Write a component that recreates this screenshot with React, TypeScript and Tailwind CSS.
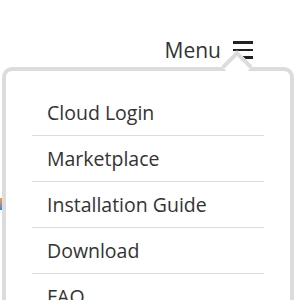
import React from "react";

const items = ["Cloud Login", "Marketplace", "Installation Guide", "Download", "FAQ"];

export default function App() {
  return (
    <div
      className="relative w-[300px] h-[300px] overflow-hidden bg-white text-[#333]"
      style={{ fontFamily: '"Open Sans", "Noto Sans", sans-serif' }}
    >
      <div className="flex justify-end items-center pt-[36px] pr-[47px] gap-[12px]">
        <span className="text-[21px] leading-[28px] text-[#333]">Menu</span>
        <span className="flex flex-col gap-[5px] w-[20px]">
          <span className="block h-[2.5px] bg-[#222]" />
          <span className="block h-[2.5px] bg-[#222]" />
          <span className="block h-[2.5px] bg-[#222]" />
        </span>
      </div>
      <div className="absolute left-[2px] top-[67px] w-[292px] h-[260px] border-4 border-[#dcdcdc] rounded-[10px] bg-white">
        <div className="absolute left-[220px] top-[-16px] w-[22px] h-[22px] rotate-45 bg-white border-t-4 border-l-4 border-[#dcdcdc]" />
        <ul className="pt-[19px] px-[26px]">
          {items.map((t) => (
            <li
              key={t}
              className="h-[46px] flex items-center pl-[15px] border-b border-[#dcdcdc] text-[19.5px]"
            >
              {t}
            </li>
          ))}
        </ul>
      </div>
      <div className="absolute left-0 top-[198px] w-[2px] h-[12px] bg-gradient-to-b from-[#f59a3a] to-[#3a7bd5]" />
    </div>
  );
}
